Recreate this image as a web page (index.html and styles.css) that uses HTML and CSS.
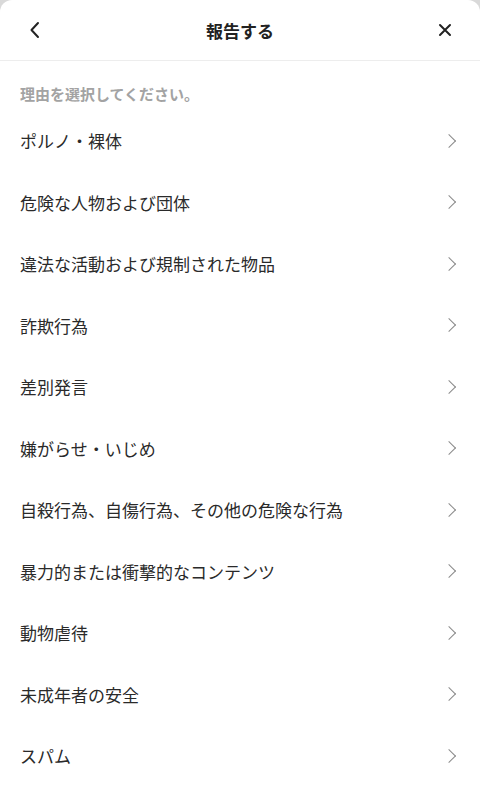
FILE: index.html
```html
<!DOCTYPE html>
<html lang="ja">
<head>
    <meta charset="UTF-8">
    <title>報告する</title>
    <link rel="stylesheet" href="styles.css">
</head>
<body>
<!-- 報告理由を選ぶシート -->
<div class="sheet">
    <header class="sheet-head">
        <button class="icon-btn" aria-label="戻る">
            <svg width="14" height="18" viewBox="0 0 14 18"><path d="M10 2 L3.5 9 L10 16" fill="none" stroke="#222" stroke-width="2" stroke-linecap="round" stroke-linejoin="round"/></svg>
        </button>
        <h1 class="sheet-title">報告する</h1>
        <button class="icon-btn" aria-label="閉じる">
            <svg width="14" height="14" viewBox="0 0 14 14"><path d="M2 2 L12 12 M12 2 L2 12" fill="none" stroke="#222" stroke-width="2" stroke-linecap="round"/></svg>
        </button>
    </header>

    <p class="hint">理由を選択してください。</p>

    <ul class="reasons">
        <li><span>ポルノ・裸体</span><i class="chev"></i></li>
        <li><span>危険な人物および団体</span><i class="chev"></i></li>
        <li><span>違法な活動および規制された物品</span><i class="chev"></i></li>
        <li><span>詐欺行為</span><i class="chev"></i></li>
        <li><span>差別発言</span><i class="chev"></i></li>
        <li><span>嫌がらせ・いじめ</span><i class="chev"></i></li>
        <li><span>自殺行為、自傷行為、その他の危険な行為</span><i class="chev"></i></li>
        <li><span>暴力的または衝撃的なコンテンツ</span><i class="chev"></i></li>
        <li><span>動物虐待</span><i class="chev"></i></li>
        <li><span>未成年者の安全</span><i class="chev"></i></li>
        <li><span>スパム</span><i class="chev"></i></li>
    </ul>
</div>
</body>
</html>
```

FILE: styles.css
```css
/* 背景は薄いグレー、シートは上の角だけ丸める */
html, body {
    margin: 0;
    height: 100%;
    background: #d9d9d9;
    font-family: "Noto Sans CJK JP", "Noto Sans", sans-serif;
}

.sheet {
    min-height: 100%;
    background: #fff;
    border-radius: 12px 12px 0 0;
}

/* ヘッダー：戻る・タイトル・閉じる */
.sheet-head {
    height: 60px;
    display: flex;
    align-items: center;
    justify-content: space-between;
    padding: 0 20px;
    border-bottom: 1px solid #ededed;
}

.icon-btn {
    width: 30px;
    height: 30px;
    padding: 0;
    border: none;
    background: none;
    display: flex;
    align-items: center;
    justify-content: center;
}

.sheet-title {
    margin: 0;
    font-size: 17px;
    font-weight: 700;
    color: #222;
}

/* 説明文 */
.hint {
    margin: 0;
    padding: 23px 20px 6px;
    line-height: 20px;
    font-size: 15px;
    font-weight: 700;
    color: #a3a3a3;
}

/* 理由のリスト */
.reasons {
    margin: 0;
    padding: 0;
    list-style: none;
}

.reasons li {
    height: 61.5px;
    display: flex;
    align-items: center;
    justify-content: space-between;
    padding: 0 22px 0 20px;
    font-size: 17px;
    color: #2a2a2a;
}

/* 右向きの矢印 */
.chev {
    width: 9px;
    height: 9px;
    border-top: 1.8px solid #8a8a8a;
    border-right: 1.8px solid #8a8a8a;
    transform: rotate(45deg);
    margin-right: 4px;
}
```
